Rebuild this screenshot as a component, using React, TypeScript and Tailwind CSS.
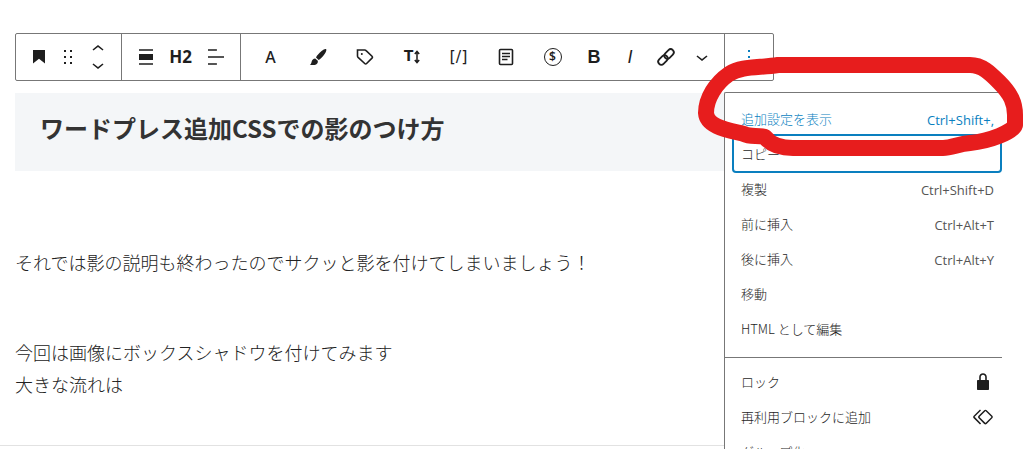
import React from 'react';
import { clsx } from 'clsx';

interface ToolButtonProps {
  label: string;
  className?: string;
  children: React.ReactNode;
}

const ToolButton: React.FC<ToolButtonProps> = ({ label, className, children }) => (
  <button
    type="button"
    aria-label={label}
    className={clsx('flex h-full items-center justify-center', className || 'w-[35px]')}
  >
    {children}
  </button>
);

const Icon: React.FC<{ d: string; className?: string }> = ({ d, className }) => (
  <svg viewBox="0 0 24 24" fill="currentColor" className={className || 'size-6'}>
    <path d={d} />
  </svg>
);

const icons = {
  heading: 'M6 5v13.6l6-4.8 6 4.8V5H6z',
  drag: 'M8 7h2V5H8v2zm0 6h2v-2H8v2zm0 6h2v-2H8v2zm6-14v2h2V5h-2zm0 8h2v-2h-2v2zm0 6h2v-2h-2v2z',
  up: 'M6.5 12.4L12 8l5.5 4.4-.9 1.2L12 10l-4.5 3.6-1-1.2z',
  down: 'M17.5 11.6L12 16l-5.5-4.4.9-1.2L12 14l4.5-3.6 1 1.2z',
  align: 'M5 4.2h14v1.5H5V4.2zM5 9h14v6H5V9zm0 9.3h14v1.5H5v-1.5z',
  textAlign: 'M4 19.8h8.9v-1.5H4v1.5zm8.9-15.6H4v1.5h8.9V4.2zm-8.9 7v1.5h16v-1.5H4z',
  brush:
    'M20 4.1c.9.8.2 2.6-1.2 4.6-1.8 2.6-4.3 5.3-6.1 6.3l-2.7-2.5c.9-2 3.4-4.6 5.6-6.4 1.9-1.6 3.6-2.6 4.4-2zM9.2 13.4l2.6 2.4c.3 1.6-.4 2.9-1.7 3.6-1.7.9-4.2.9-6.3.3 1.3-.6 1.5-1.6 1.8-3 .4-1.8 1.8-3.3 3.6-3.3z',
  more: 'M13 19h-2v-2h2v2zm0-6h-2v-2h2v2zm0-6h-2V5h2v2z',
  lock: 'M17 10h-1.2V7c0-2.1-1.7-3.8-3.8-3.8S8.2 4.9 8.2 7v3H7c-.6 0-1 .4-1 1v8c0 .6.4 1 1 1h10c.6 0 1-.4 1-1v-8c0-.6-.4-1-1-1zm-2.8 0H9.8V7c0-1.2 1-2.2 2.2-2.2s2.2 1 2.2 2.2v3z',
  reusable:
    'M21.3 10.8l-5.6-5.6c-.7-.7-1.8-.7-2.5 0l-5.6 5.6c-.7.7-.7 1.8 0 2.5l5.6 5.6c.3.3.8.5 1.2.5s.9-.2 1.2-.5l5.6-5.6c.8-.7.8-1.9.1-2.5zm-1 1.4l-5.6 5.6c-.1.1-.3.1-.4 0l-5.6-5.6c-.1-.1-.1-.3 0-.4l5.6-5.6s.1-.1.2-.1.1 0 .2.1l5.6 5.6c.1.1.1.3 0 .4zm-16.6-.4L10 5.5l-1-1-6.3 6.3c-.7.7-.7 1.8 0 2.5L9 19.5l1.1-1.1-6.3-6.3c-.2 0-.2-.2-.1-.3z',
};

const blockActions = [
  { label: '追加設定を表示', shortcut: 'Ctrl+Shift+,', active: true },
  { label: 'コピー', focused: true },
  { label: '複製', shortcut: 'Ctrl+Shift+D' },
  { label: '前に挿入', shortcut: 'Ctrl+Alt+T' },
  { label: '後に挿入', shortcut: 'Ctrl+Alt+Y' },
  { label: '移動' },
  { label: 'HTML として編集' },
];

const groupActions = [
  { label: 'ロック', icon: icons.lock },
  { label: '再利用ブロックに追加', icon: icons.reusable },
  { label: 'グループ化' },
];

interface MenuRowProps {
  label: string;
  shortcut?: string;
  icon?: string;
  active?: boolean;
  focused?: boolean;
}

const MenuRow: React.FC<MenuRowProps> = ({ label, shortcut, icon, active, focused }) => (
  <button
    type="button"
    role="menuitem"
    className={clsx(
      'flex h-[35px] w-full items-center justify-between rounded-xs pl-[7px] text-[13px]',
      icon ? 'pr-[5px]' : 'pr-1.5',
      active ? 'text-[#0a7fbf]' : 'text-[#1e1e1e]',
      focused && 'ring-2 ring-[#0a7fbf]'
    )}
  >
    <span className="font-light">{label}</span>
    {shortcut && (
      <span className={clsx('pt-1 font-["Open_Sans",sans-serif]', !active && 'text-[#555]')}>{shortcut}</span>
    )}
    {icon && <Icon d={icon} className="size-6 text-[#1e1e1e]" />}
  </button>
);

const OptionsMenu: React.FC = () => (
  <div
    role="menu"
    className="absolute top-[58px] -left-px w-[278px] rounded-tl-xs border-t border-l border-[#777] bg-white"
  >
    <div className="pt-2 pr-0.5 pb-[11px] pl-[9px]">
      {blockActions.map((item) => (
        <MenuRow key={item.label} {...item} />
      ))}
    </div>
    <div className="border-t border-[#777] pt-1.5 pr-0.5 pb-2.5 pl-[9px]">
      {groupActions.map((item) => (
        <MenuRow key={item.label} {...item} />
      ))}
    </div>
  </div>
);

const Toolbar: React.FC = () => (
  <div
    role="toolbar"
    className="flex h-12 w-fit rounded-xs border border-[#777] bg-white text-[#1e1e1e]"
  >
    <div className="flex px-1.5 pl-[5px]">
      <ToolButton label="見出し">
        <Icon d={icons.heading} />
      </ToolButton>
      <ToolButton label="ドラッグ" className="w-6">
        <Icon d={icons.drag} />
      </ToolButton>
      <div className="flex w-[35px] flex-col items-center justify-center">
        <button type="button" aria-label="上に移動" className="flex h-4 items-center">
          <Icon d={icons.up} />
        </button>
        <button type="button" aria-label="下に移動" className="flex h-4 items-center">
          <Icon d={icons.down} />
        </button>
      </div>
    </div>

    <div className="flex border-l border-[#777] pr-[7px] pl-1.5">
      <ToolButton label="配置">
        <Icon d={icons.align} />
      </ToolButton>
      <ToolButton label="見出しレベル">
        <span className='font-["Noto_Sans",sans-serif] text-[17px] font-bold'>H2</span>
      </ToolButton>
      <ToolButton label="テキストの配置">
        <Icon d={icons.textAlign} />
      </ToolButton>
    </div>

    <div className="flex border-l border-[#777] pr-1 pl-1.5">
      <ToolButton label="文字色" className="w-[47px]">
        <span className='font-["Noto_Sans",sans-serif] text-base font-medium'>A</span>
      </ToolButton>
      <ToolButton label="マーカー" className="w-[47px]">
        <Icon d={icons.brush} />
      </ToolButton>
      <ToolButton label="バッジ" className="w-[47px]">
        <svg viewBox="0 0 24 24" fill="none" stroke="currentColor" strokeWidth="1.6" className="size-6">
          <path d="M4.5 5h7.3c.5 0 .9.2 1.3.6l5.9 5.6c.6.6.6 1.3 0 1.9l-5.4 5.4c-.6.6-1.3.6-1.9 0l-6.6-6.1a2 2 0 0 1-.6-1.4V5z" />
          <circle cx="8.8" cy="9" r="1" fill="currentColor" stroke="none" />
        </svg>
      </ToolButton>
      <ToolButton label="文字サイズ" className="w-[47px]">
        <span className='font-["Liberation_Mono",monospace] text-[17px] font-bold'>T</span>
        <svg viewBox="0 0 6 14" fill="none" stroke="currentColor" strokeWidth="1.5" className="h-3.5 w-1.5">
          <path d="M3 2v10M.8 4L3 1.5 5.2 4M.8 10L3 12.5 5.2 10" />
        </svg>
      </ToolButton>
      <ToolButton label="ショートコード" className="w-[47px]">
        <span className='font-["DejaVu_Sans",sans-serif] text-base'>[/]</span>
      </ToolButton>
      <ToolButton label="テンプレート" className="w-[47px]">
        <svg viewBox="0 0 24 24" fill="none" stroke="currentColor" strokeWidth="1.6" className="size-6">
          <rect x="5.5" y="4.5" width="13" height="15" rx="1" />
          <path d="M8 8.5h8M8 11.5h8M8 14.5h5.5" />
        </svg>
      </ToolButton>
      <ToolButton label="広告" className="w-[47px]">
        <span className='flex size-[18px] items-center justify-center rounded-full border border-[#1e1e1e] font-["Noto_Sans",sans-serif] text-xs font-semibold'>
          $
        </span>
      </ToolButton>
      <ToolButton label="太字" className="w-9">
        <span className='font-["Liberation_Sans",sans-serif] text-lg font-bold'>B</span>
      </ToolButton>
      <ToolButton label="イタリック" className="w-9">
        <span className='font-["Liberation_Sans",sans-serif] text-lg italic'>I</span>
      </ToolButton>
      <ToolButton label="リンク" className="w-9">
        <svg viewBox="0 0 24 24" fill="none" stroke="currentColor" strokeWidth="1.8" className="size-6">
          <g transform="rotate(-45 12 12)">
            <rect x="2.3" y="8.9" width="10.8" height="6.2" rx="3.1" />
            <rect x="10.9" y="8.9" width="10.8" height="6.2" rx="3.1" />
          </g>
        </svg>
      </ToolButton>
      <ToolButton label="さらに表示" className="w-9">
        <Icon d={icons.down} />
      </ToolButton>
    </div>

    <div className="relative z-10 flex border-l border-[#777] px-1.5">
      <ToolButton label="オプション" className="w-9">
        <Icon d={icons.more} className="size-6 text-[#0a7fbf]" />
      </ToolButton>
      <OptionsMenu />
    </div>
  </div>
);

// Hand-drawn marker ring around the first menu entry
const MarkerRing: React.FC = () => (
  <svg
    width="1024"
    height="449"
    viewBox="0 0 1024 449"
    fill="none"
    className="pointer-events-none absolute top-0 left-0 z-20"
  >
    <path
      d="M778 65H970C982 65 990 73 999 82C1011 94 1015 103 1015 115V125C1013 132 990 141 970 143C958 144 952 148 943 148H793C780 148 770 144 765 137C758 135 750 137 744 134C728 130 707 127 706 113C706 98 716 83 729 74C742 66 758 68 778 65Z"
      stroke="#e71d1d"
      strokeWidth="16"
      strokeLinejoin="round"
    />
  </svg>
);

const App: React.FC = () => {
  return (
    <div className='relative h-screen overflow-hidden bg-white pt-[33px] font-["Noto_Sans_CJK_JP",sans-serif] text-[#333]'>
      <div className="pr-[22px] pl-[15px]">
        <Toolbar />
        <h2 className="mt-3 bg-[#f4f6f8] pt-[17px] pb-[25px] pl-[25px] text-2xl leading-9 font-bold">
          ワードプレス追加CSSでの影のつけ方
        </h2>
        <p className="mt-[75px] text-lg leading-8 font-light text-[#222]">
          それでは影の説明も終わったのでサクッと影を付けてしまいましょう！
        </p>
        <p className="mt-[58px] text-lg leading-8 font-light text-[#222]">
          今回は画像にボックスシャドウを付けてみます
          <br />
          大きな流れは
        </p>
      </div>
      <div className="mt-[45px] mr-[22px] border-t border-[#e2e2e2]" />
      <MarkerRing />
    </div>
  );
};

export default App;
